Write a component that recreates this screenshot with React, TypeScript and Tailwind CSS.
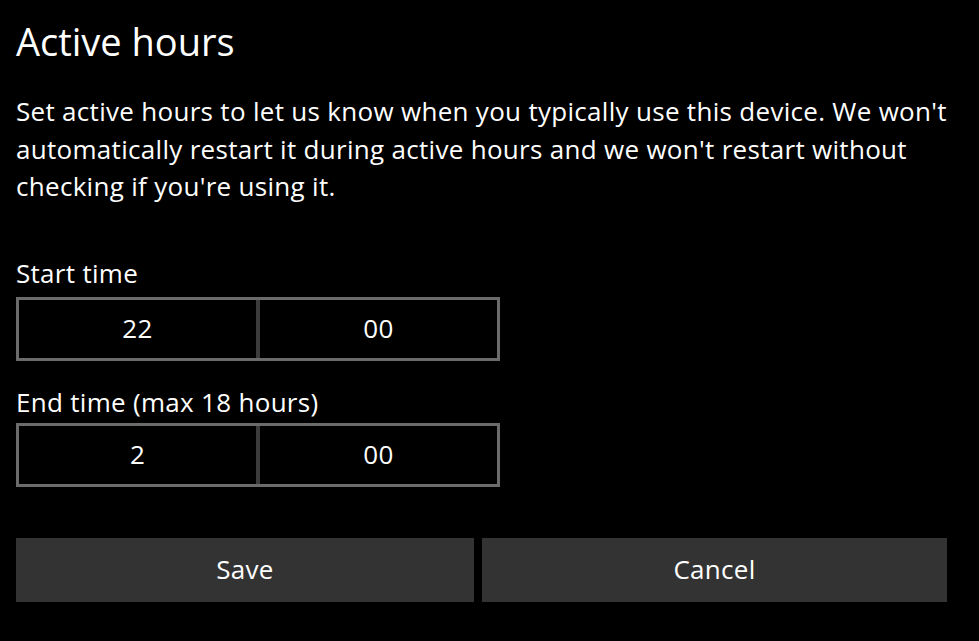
import React from 'react';

const font = { fontFamily: '"Open Sans", "Noto Sans", sans-serif' };

function TimeBox({ hour, minute }: { hour: string; minute: string }) {
  return (
    <div className="flex w-[484px] h-[64px] border-[3px] border-[#6b6b6b] bg-black">
      <div className="flex-1 flex items-center justify-center text-[26px] tracking-[0.3px] text-white">{hour}</div>
      <div className="w-[4px] bg-[#3c3c3c]" />
      <div className="flex-1 flex items-center justify-center text-[26px] tracking-[0.3px] text-white">{minute}</div>
    </div>
  );
}

export default function App() {
  return (
    <div className="w-[979px] h-[641px] bg-black text-white pl-4 pt-[19px] overflow-hidden" style={font}>
      <h1 className="text-[38px] leading-[44px] font-normal">Active hours</h1>

      <p className="mt-[30px] text-[26px] leading-[37.5px] tracking-[0.3px] whitespace-nowrap">
        Set active hours to let us know when you typically use this device. We won't
        <br />
        automatically restart it during active hours and we won't restart without
        <br />
        checking if you're using it.
      </p>

      <div className="mt-[48px] text-[26px] leading-[38px] tracking-[0.3px]">Start time</div>
      <div className="mt-[5px]">
        <TimeBox hour="22" minute="00" />
      </div>

      <div className="mt-[22px] text-[26px] leading-[38px] tracking-[0.3px]">End time (max 18 hours)</div>
      <div className="mt-[2px]">
        <TimeBox hour="2" minute="00" />
      </div>

      <div className="mt-[51px] flex gap-2">
        <button className="w-[458px] h-[64px] bg-[#333333] text-[26px] tracking-[0.3px] text-white">Save</button>
        <button className="w-[465px] h-[64px] bg-[#333333] text-[26px] tracking-[0.3px] text-white">Cancel</button>
      </div>
    </div>
  );
}
